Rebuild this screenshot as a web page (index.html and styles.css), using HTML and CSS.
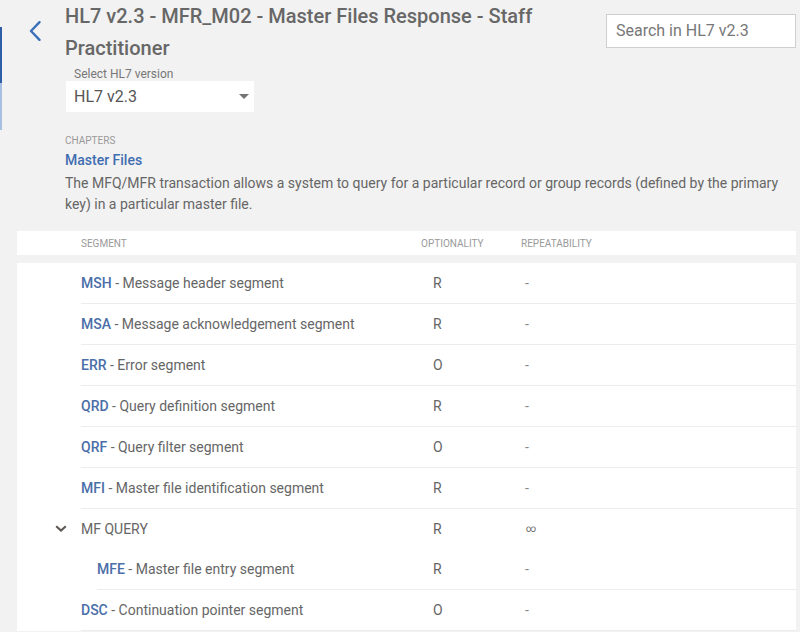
FILE: index.html
```html
<!DOCTYPE html>
<html lang="en">
<head>
<meta charset="utf-8">
<title>HL7 v2.3 - MFR_M02</title>
<link rel="stylesheet" href="styles.css">
</head>
<body>
<div class="page">
  <div class="rail">
    <div class="rail-gap"></div>
    <div class="rail-dark"></div>
    <div class="rail-light"></div>
  </div>
  <main class="main">
    <header class="top">
      <div class="back">
        <svg width="12" height="20" viewBox="0 0 12 20"><path d="M10.5 1.2 L2 10 L10.5 18.8" fill="none" stroke="#3a70b9" stroke-width="2.4" stroke-linecap="round" stroke-linejoin="round"/></svg>
      </div>
      <div class="head">
        <h1 class="title">HL7 v2.3 - MFR_M02 - Master Files Response - Staff Practitioner</h1>
        <div class="version">
          <div class="version-label">Select HL7 version</div>
          <div class="select">
            <span>HL7 v2.3</span>
            <svg width="10" height="5" viewBox="0 0 10 5"><path d="M0 0 L10 0 L5 5 Z" fill="#757575"/></svg>
          </div>
        </div>
      </div>
      <div class="search">Search in HL7 v2.3</div>
    </header>

    <section class="chapter">
      <div class="chapter-label">CHAPTERS</div>
      <div class="chapter-link">Master Files</div>
      <p class="chapter-desc">The MFQ/MFR transaction allows a system to query for a particular record or group records (defined by the primary key) in a particular master file.</p>
    </section>

    <div class="thead">
      <div>SEGMENT</div>
      <div>OPTIONALITY</div>
      <div>REPEATABILITY</div>
    </div>

    <div class="tbody">
      <div class="row"><div class="seg"><b>MSH</b> - Message header segment</div><div class="opt">R</div><div class="rep">-</div></div>
      <div class="row"><div class="seg"><b>MSA</b> - Message acknowledgement segment</div><div class="opt">R</div><div class="rep">-</div></div>
      <div class="row"><div class="seg"><b>ERR</b> - Error segment</div><div class="opt">O</div><div class="rep">-</div></div>
      <div class="row"><div class="seg"><b>QRD</b> - Query definition segment</div><div class="opt">R</div><div class="rep">-</div></div>
      <div class="row"><div class="seg"><b>QRF</b> - Query filter segment</div><div class="opt">O</div><div class="rep">-</div></div>
      <div class="row"><div class="seg"><b>MFI</b> - Master file identification segment</div><div class="opt">R</div><div class="rep">-</div></div>
      <div class="row group"><div class="seg"><span class="toggle"><svg width="12" height="7" viewBox="0 0 12 7"><path d="M1.2 1.2 L6 5.6 L10.8 1.2" fill="none" stroke="#5e5650" stroke-width="2"/></svg></span>MF QUERY</div><div class="opt">R</div><div class="rep"><span class="inf">∞</span></div></div>
      <div class="row child"><div class="seg"><b>MFE</b> - Master file entry segment</div><div class="opt">R</div><div class="rep">-</div></div>
      <div class="row"><div class="seg"><b>DSC</b> - Continuation pointer segment</div><div class="opt">O</div><div class="rep">-</div></div>
    </div>
  </main>
</div>
</body>
</html>
```

FILE: styles.css
```css
* { box-sizing: border-box; }
html, body { margin: 0; padding: 0; }
body {
  background: #f2f2f2;
  font-family: Roboto, "Liberation Sans", Arial, sans-serif;
  color: #666;
  width: 800px;
  height: 632px;
  overflow: hidden;
}
.page { display: flex; align-items: flex-start; }
.rail { width: 2px; flex: none; display: flex; flex-direction: column; }
.rail-gap { height: 27px; }
.rail-dark { height: 56px; background: #2e5ea8; }
.rail-light { height: 47px; background: #a6bfe3; }

.main { flex: 1; padding: 0 4px 0 15px; min-width: 0; }

.top { display: flex; align-items: flex-start; }
.back { width: 48px; flex: none; padding: 21px 0 0 12px; height: 40px; }
.back svg { display: block; }
.head { flex: 1; min-width: 0; }
.title {
  margin: 0;
  font-size: 20px;
  font-weight: 500;
  line-height: 32px;
  color: #676767;
  max-width: 520px;
}
.version { margin: 2px 0 0 1px; }
.version-label { font-size: 12px; line-height: 14px; color: #777; padding: 1px 0 0 8px; height: 15px; }
.select {
  width: 188px; height: 31px; background: #fff;
  display: flex; align-items: center; justify-content: space-between;
  padding: 0 5px 0 8px;
  font-size: 16px; color: #555;
}
.select svg { display: block; }
.search {
  flex: none;
  width: 190px; height: 34px;
  margin-top: 14px;
  border: 1px solid #cfcfcf;
  background: #fff;
  font-size: 16px; line-height: 32px;
  color: #777;
  padding-left: 9px;
}

.chapter { padding: 22px 0 0 48px; }
.chapter-label { font-size: 10px; line-height: 12px; color: #999; padding-top: 1px; }
.chapter-link { margin-top: 3px; font-size: 14px; font-weight: 500; line-height: 20px; color: #3f6db0; }
.chapter-desc { margin: 3px 0 0; font-size: 14px; line-height: 21px; color: #666; }

.thead {
  margin-top: 16px;
  height: 24px;
  background: #fff;
  display: grid;
  grid-template-columns: 340px 100px 1fr;
  align-items: center;
  padding-left: 64px;
  font-size: 10px;
  color: #999;
}
.tbody { margin-top: 8px; background: #fff; }
.row {
  margin-left: 64px;
  height: 41px;
  display: grid;
  grid-template-columns: 340px 100px 1fr;
  align-items: center;
  border-bottom: 1px solid #ececec;
  font-size: 14px;
  color: #666;
  padding-bottom: 1px;
}
.row.group { border-bottom: none; height: 40px; }
.row.child { margin-left: 80px; grid-template-columns: 324px 100px 1fr; height: 41px; }
.seg { display: flex; align-items: center; white-space: pre; }
.seg b { font-weight: 500; color: #4a6ea8; }
.toggle { width: 26px; margin-left: -26px; display: flex; align-items: center; }
.toggle svg { display: block; }
.opt { padding-left: 12px; }
.rep { padding-left: 4px; color: #888; }
.inf { font-size: 10px; color: #666; position: relative; top: -2px; padding-left: 1px; }
```
